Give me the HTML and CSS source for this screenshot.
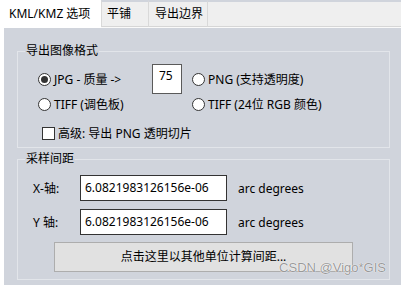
FILE: index.html
```html
<!DOCTYPE html>
<html>
<head>
<meta charset="utf-8">
<link rel="stylesheet" href="styles.css">
</head>
<body>
<div class="window">
  <div class="tabs">
    <div class="tab active">KML/KMZ 选项</div>
    <div class="tab t2">平铺</div>
    <div class="tab t3">导出边界</div>
    <div class="tab fill"></div>
  </div>
  <div class="page">
    <div class="edge"></div>
    <div class="content">
      <fieldset class="group g1">
        <legend>导出图像格式</legend>
        <div class="body">
          <div class="row r1">
            <div class="opt w1"><span class="radio on"></span>JPG - 质量 -&gt;</div>
            <div class="num">75</div>
            <div class="opt"><span class="radio"></span>PNG (支持透明度)</div>
          </div>
          <div class="row r2">
            <div class="opt w2"><span class="radio"></span>TIFF (调色板)</div>
            <div class="opt"><span class="radio"></span>TIFF (24位 RGB 颜色)</div>
          </div>
          <div class="row r3">
            <div class="opt"><span class="check"></span>高级: 导出 PNG 透明切片</div>
          </div>
        </div>
      </fieldset>
      <fieldset class="group g2">
        <legend>采样间距</legend>
        <div class="body">
          <div class="field">
            <span class="lbl">X-轴:</span>
            <div class="input">6.0821983126156e-06</div>
            <span class="unit">arc degrees</span>
          </div>
          <div class="field f2">
            <span class="lbl">Y 轴:</span>
            <div class="input">6.0821983126156e-06</div>
            <span class="unit">arc degrees</span>
          </div>
          <div class="button">点击这里以其他单位计算间距...</div>
        </div>
      </fieldset>
    </div>
  </div>
  <div class="watermark">CSDN @Vigo*GIS</div>
</div>
</body>
</html>
```

FILE: styles.css
```css
html, body {
  margin: 0;
  padding: 0;
}
body {
  width: 401px;
  height: 285px;
  overflow: hidden;
  font-family: "Noto Sans", "Noto Sans CJK SC", sans-serif;
  font-size: 12px;
  color: #000;
}
.window {
  position: relative;
  width: 401px;
  height: 285px;
  background: #d0d4dc;
}
.tabs {
  display: flex;
  height: 28px;
  background: #fafafa;
}
.tab {
  box-sizing: border-box;
  height: 27px;
  border-top: 2px solid #d0d4dc;
  border-bottom: 1px solid #d6d6d6;
  background: #efefef;
  line-height: 23px;
}
.tab.active {
  width: 101px;
  height: 28px;
  border: none;
  background: #fff;
  padding-left: 9px;
  line-height: 27px;
}
.tab.t2 {
  width: 47px;
  padding-left: 5px;
  border-left: 1px solid #d9d9d9;
}
.tab.t3 {
  width: 60px;
  padding-left: 6px;
  border-left: 1px solid #d9d9d9;
  border-right: 1px solid #d9d9d9;
}
.tab.fill {
  flex: 1;
}
.page {
  display: flex;
  height: 257px;
}
.edge {
  width: 4px;
  background: #fff;
}
.content {
  flex: 1;
  padding: 15px 11px 0 13px;
}
.group {
  margin: 0;
  padding: 0;
  border: 1px solid #e2e5ea;
  min-width: 0;
}
.group legend {
  margin-left: 7px;
  padding: 0 1px;
  line-height: 16px;
  font-size: 12px;
}
.g2 {
  margin-top: 3px;
}
.g1 .body {
  padding: 5px 0 5px 20px;
}
.row {
  display: flex;
  align-items: center;
}
.r1 { height: 30px; }
.r2 { height: 20px; }
.r3 { height: 18px; margin-top: 10px; padding-left: 4px; }
.opt {
  display: flex;
  align-items: center;
  white-space: nowrap;
}
.w1 { width: 114px; }
.w2 { width: 154px; }
.num {
  box-sizing: border-box;
  width: 30px;
  height: 30px;
  margin-right: 10px;
  border: 1px solid #5a5a5a;
  background: #fff;
  padding: 3px 0 0 6px;
  line-height: 16px;
}
.radio {
  box-sizing: border-box;
  width: 13px;
  height: 13px;
  margin-right: 3px;
  border: 1px solid #333;
  border-radius: 50%;
  background: #fff;
  display: flex;
  align-items: center;
  justify-content: center;
}
.radio.on::after {
  content: "";
  width: 7px;
  height: 7px;
  border-radius: 50%;
  background: #333;
}
.check {
  box-sizing: border-box;
  width: 13px;
  height: 13px;
  margin-right: 3px;
  border: 1px solid #333;
  background: #fff;
}
.g2 .body {
  padding: 8px 0 7px 15px;
}
.field {
  display: flex;
  align-items: center;
  height: 26px;
}
.f2 { margin-top: 8px; }
.lbl { width: 47px; }
.input {
  box-sizing: border-box;
  width: 147px;
  height: 26px;
  border: 1px solid #333;
  background: #fff;
  padding-left: 4px;
  line-height: 24px;
}
.unit { margin-left: 11px; }
.button {
  box-sizing: border-box;
  width: 299px;
  height: 30px;
  margin: 7px 0 0 21px;
  border: 1px solid #adadad;
  background: #e1e1e1;
  text-align: center;
  line-height: 27px;
}
.watermark {
  position: absolute;
  right: 15px;
  top: 260px;
  font-family: "Liberation Sans", sans-serif;
  font-size: 13px;
  color: rgba(120, 120, 120, 0.75);
  text-shadow: 0 0 1px #fff, 0 0 1px #fff;
}
```
